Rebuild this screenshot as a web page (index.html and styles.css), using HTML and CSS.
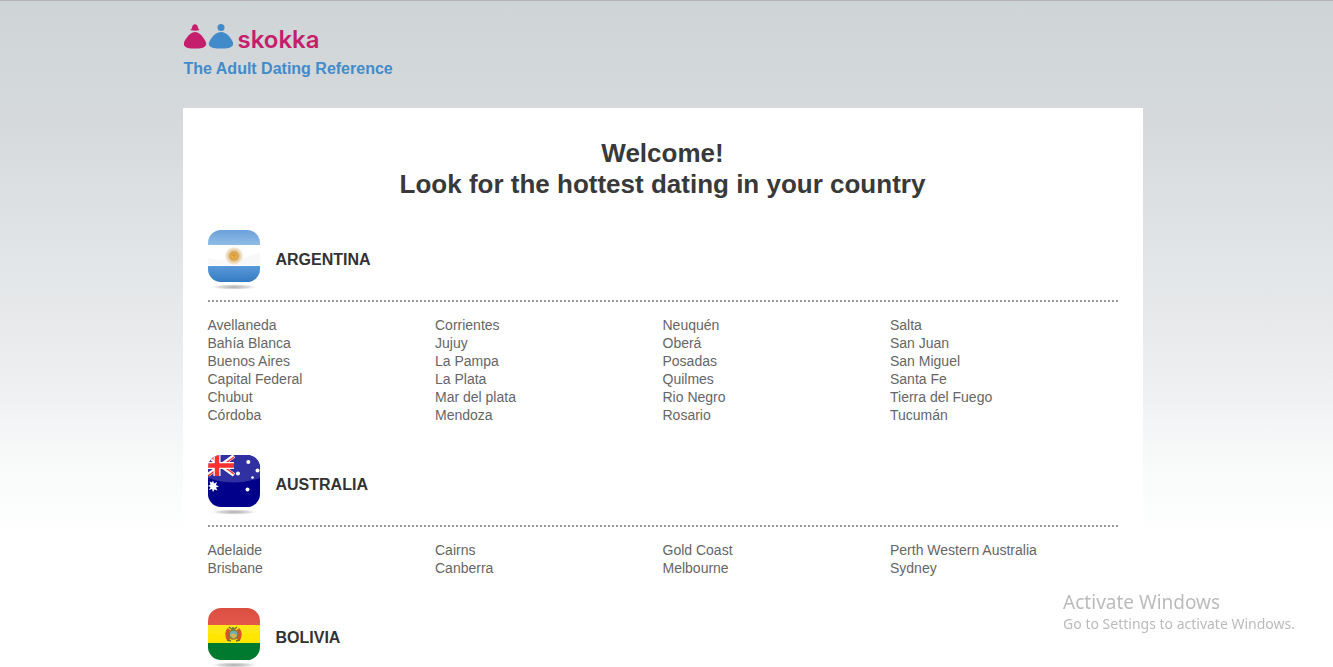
FILE: index.html
```html
<!DOCTYPE html>
<html lang="en">
<head>
<meta charset="utf-8">
<title>skokka</title>
<link rel="stylesheet" href="styles.css">
</head>
<body>
<svg class="defs" width="0" height="0" aria-hidden="true">
  <defs>
    <clipPath id="tile"><rect width="52" height="52" rx="13"/></clipPath>
    <radialGradient id="shade"><stop offset="0" stop-color="#aaa"/><stop offset=".6" stop-color="#ccc" stop-opacity=".7"/><stop offset="1" stop-color="#fff" stop-opacity="0"/></radialGradient>
    <linearGradient id="blue-top" x2="0" y2="1"><stop offset="0" stop-color="#6ba0da"/><stop offset="1" stop-color="#91bce8"/></linearGradient>
    <linearGradient id="blue-bottom" x2="0" y2="1"><stop offset="0" stop-color="#5999d9"/><stop offset="1" stop-color="#347bc1"/></linearGradient>
    <linearGradient id="red" x2="0" y2="1"><stop offset="0" stop-color="#da4f42"/><stop offset="1" stop-color="#e3584b"/></linearGradient>
    <radialGradient id="sun"><stop offset="0" stop-color="#f4bc4c"/><stop offset=".45" stop-color="#dda657"/><stop offset=".65" stop-color="#e8cda4"/><stop offset="1" stop-color="#f8f3eb"/></radialGradient>
  </defs>
</svg>
<div class="page">
  <header class="header">
    <a class="brand" href="#" aria-label="skokka">
      <svg width="49" height="25" viewBox="0 0 49 25" aria-hidden="true">
        <path fill="#c41e6c" d="M6.300 6Q8 5 8.200 3C8.500 1 9.500 .2 11 .2s2.500 .8 2.800 2.800Q14 5 15.700 6Q11 7.500 6.300 6zM11 8c3.500 0 6 2.500 8.500 6 2 3 3.200 5 2.500 7-1 3-6 3.600-11 3.600S1 24 0 21c-.7-2 .5-4 2.500-7C5 10.500 7.500 8 11 8z"/>
        <circle fill="#428bca" cx="37" cy="3.500" r="3.500"/>
        <path fill="#428bca" d="M37 8c4 0 7 2.500 9.500 6 2 3 3.200 5 2.500 7-1 3-7 3.600-12 3.600S26 24 25 21c-.7-2 .5-4 2.500-7C30 10.500 33 8 37 8z"/>
      </svg>
      <span class="brand-name">skokka</span>
    </a>
    <p class="tagline">The Adult Dating Reference</p>
  </header>
  <main class="panel">
    <h1 class="title">Welcome!<br>Look for the hottest dating in your country</h1>
    <section class="country">
      <div class="country-head">
        <svg class="flag" width="52" height="60" viewBox="0 0 52 60" aria-hidden="true">
          <ellipse cx="26" cy="57" rx="25" ry="3" fill="url(#shade)"/>
          <g clip-path="url(#tile)">
            <path fill="#fff" d="M0 0h52v52H0z"/>
            <path fill="url(#blue-top)" d="M0 0h52v15H0z"/>
            <path fill="#f8f8f9" d="M0 28Q26 34 52 22v13H0z"/>
            <path fill="url(#blue-bottom)" d="M0 36h52v16H0z"/>
            <circle cx="26" cy="26" r="9" fill="url(#sun)"/>
            <circle cx="26" cy="26" r="3.500" fill="#f0b544" stroke="#d09a48"/>
            <path d="M24 25h4M26 25v3" stroke="#c98b32" fill="none"/>
          </g>
        </svg>
        <h2 class="country-name">ARGENTINA</h2>
      </div>
      <div class="cities">
        <ul><li><a href="#">Avellaneda</a></li><li><a href="#">Bahía Blanca</a></li><li><a href="#">Buenos Aires</a></li><li><a href="#">Capital Federal</a></li><li><a href="#">Chubut</a></li><li><a href="#">Córdoba</a></li></ul>
        <ul><li><a href="#">Corrientes</a></li><li><a href="#">Jujuy</a></li><li><a href="#">La Pampa</a></li><li><a href="#">La Plata</a></li><li><a href="#">Mar del plata</a></li><li><a href="#">Mendoza</a></li></ul>
        <ul><li><a href="#">Neuquén</a></li><li><a href="#">Oberá</a></li><li><a href="#">Posadas</a></li><li><a href="#">Quilmes</a></li><li><a href="#">Rio Negro</a></li><li><a href="#">Rosario</a></li></ul>
        <ul><li><a href="#">Salta</a></li><li><a href="#">San Juan</a></li><li><a href="#">San Miguel</a></li><li><a href="#">Santa Fe</a></li><li><a href="#">Tierra del Fuego</a></li><li><a href="#">Tucumán</a></li></ul>
      </div>
    </section>
    <section class="country">
      <div class="country-head">
        <svg class="flag" width="52" height="60" viewBox="0 0 52 60" aria-hidden="true">
          <ellipse cx="26" cy="57" rx="25" ry="3" fill="url(#shade)"/>
          <g clip-path="url(#tile)">
            <path fill="#00008b" d="M0 0h52v52H0z"/>
            <path fill="#3030a2" d="M0 0h52v23Q26 32 0 23z"/>
            <path stroke="#fff" stroke-width="4" d="M0 1l26 19M0 20L26 1"/>
            <path stroke="#f33" stroke-width="1.500" d="M0 0l26 19M0 21L26 2"/>
            <path stroke="#fff" stroke-width="7" d="M0 10.500h26M9 0v21"/>
            <path stroke="#ff3030" stroke-width="4.500" d="M0 10.500h26M9 0v21"/>
            <path fill="#fff" d="M5 25.500l1 3 3-1.500-1 3 3 1.500-3 1 1.500 3-3-1L5 37l-1-3-3 1 1.500-3L0 31l2.500-1.500-1-3 2.500 1z"/>
            <g fill="#fff"><circle cx="40.300" cy="7" r="2"/><circle cx="30" cy="18.500" r="2"/><circle cx="49.500" cy="15.500" r="2"/><circle cx="44.500" cy="22.500" r="1.300"/><circle cx="39.500" cy="34.500" r="2"/></g>
          </g>
        </svg>
        <h2 class="country-name">AUSTRALIA</h2>
      </div>
      <div class="cities">
        <ul><li><a href="#">Adelaide</a></li><li><a href="#">Brisbane</a></li></ul>
        <ul><li><a href="#">Cairns</a></li><li><a href="#">Canberra</a></li></ul>
        <ul><li><a href="#">Gold Coast</a></li><li><a href="#">Melbourne</a></li></ul>
        <ul><li><a href="#">Perth Western Australia</a></li><li><a href="#">Sydney</a></li></ul>
      </div>
    </section>
    <section class="country">
      <div class="country-head">
        <svg class="flag" width="52" height="60" viewBox="0 0 52 60" aria-hidden="true">
          <ellipse cx="26" cy="57" rx="25" ry="3" fill="url(#shade)"/>
          <g clip-path="url(#tile)">
            <path fill="url(#red)" d="M0 0h52v17H0z"/>
            <path fill="#ffe600" d="M0 17h52v18H0z"/>
            <path fill="#ffe814" d="M0 17h52v7Q26 29 0 25z"/>
            <path fill="#007a2f" d="M0 35h52v17H0z"/>
            <path stroke="#d9502c" stroke-width="3.500" fill="none" d="M21 21q-4 5 0 11M30 21q4 5 0 11"/>
            <path stroke="#66713d" stroke-width="1.500" fill="none" d="M21 19l4 3 4-3M25 19v4M19 32l4 1M28 33l4-1"/>
            <circle cx="25.500" cy="26.500" r="4.500" fill="#69b3b0" stroke="#8c7432" stroke-width="1.500"/>
            <path fill="#e0b04b" d="M22 27q3-3 7 0l-3 4z"/>
          </g>
        </svg>
        <h2 class="country-name">BOLIVIA</h2>
      </div>
    </section>
  </main>
</div>
<aside class="notice"><p class="notice-title">Activate Windows</p><p class="notice-text">Go to Settings to activate Windows.</p></aside>
</body>
</html>
```
FILE: styles.css
```css
* { box-sizing: border-box; }
body, h1, h2, p, ul { margin: 0; padding: 0; }
body {
  height: 100vh;
  overflow: hidden;
  padding: 0 8px 0 0;
  border-top: 1px solid #b4b2b5;
  background: linear-gradient(#cfd4d7, #d6dadd 130px, #e1e5e7 255px, #e9eaec 332px, #f0f1f3 400px, #f7f9f9 450px, #fff 540px) no-repeat #fff;
  color: #666;
  font: 14px/18px "Liberation Sans", Arial, sans-serif;
}
.defs { position: absolute; }
a { color: inherit; text-decoration: none; }
ul { list-style: none; }
.page { max-width: 960px; margin: 0 auto; }
.header { padding: 23px 0 29px 1px; }
.brand { display: flex; align-items: flex-end; gap: 5px; height: 25px; }
.brand svg { flex: none; }
.brand-name { color: #c41e6c; font: 600 24px/18px Inter, "Liberation Sans", Arial, sans-serif; }
.tagline { margin-top: 10px; color: #428bca; font-size: 16px; font-weight: bold; line-height: 20px; }
.panel { padding: 30px 25px 0; background: #fff; }
.title { color: #393939; font-size: 26px; line-height: 31px; text-align: center; }
.country { margin-top: 31px; }
.title + .country { margin-top: 30px; }
.country-head { display: flex; gap: 16px; height: 72px; border-bottom: 2px dotted #999; }
.flag { flex: none; }
.country-name { padding-top: 20px; color: #333; font-size: 16px; line-height: 20px; }
.cities { display: grid; grid-template-columns: repeat(4, 1fr); padding-top: 14px; }
.notice { position: fixed; right: 38px; bottom: 33px; color: #bbb; font-family: "Noto Sans", "Open Sans", sans-serif; }
.notice-title { font-size: 19px; line-height: 24px; }
.notice-text { font-size: 14px; line-height: 20px; }
```
